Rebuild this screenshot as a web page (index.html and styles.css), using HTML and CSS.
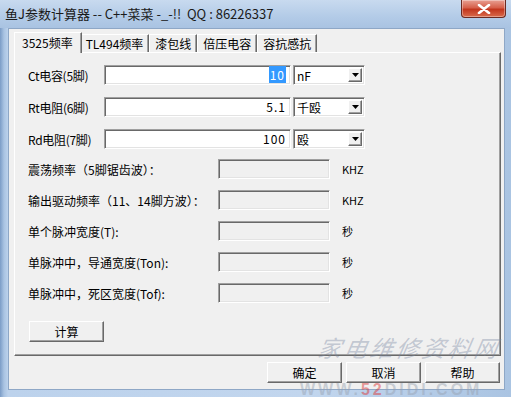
FILE: index.html
```html
<!DOCTYPE html>
<html lang="zh-CN">
<head>
    <meta charset="UTF-8">
    <title>鱼J参数计算器</title>
    <link rel="stylesheet" href="styles.css">
</head>
<body>
    <div class="window">
        <div class="titlebar">
            <span class="title">鱼J参数计算器 -- C++菜菜 -_-!!&nbsp; QQ : 86226337</span>
            <span class="close">
                <svg width="14" height="10" viewBox="0 0 14 10">
                    <path d="M2 1 L12 9 M12 1 L2 9" stroke="#ffffff" stroke-width="2.6" stroke-linecap="round"/>
                </svg>
            </span>
        </div>
        <div class="client">
            <div class="tabs">
                <div class="tab active">3525频率</div>
                <div class="tab">TL494频率</div>
                <div class="tab">漆包线</div>
                <div class="tab">倍压电容</div>
                <div class="tab">容抗感抗</div>
            </div>
            <div class="panel">
                <div class="row in-row">
                    <label class="lbl">Ct电容(5脚)</label>
                    <div class="field value"><span class="sel">10</span></div>
                    <div class="combo"><span class="combo-text">nF</span><span class="drop"><svg width="7" height="4" viewBox="0 0 7 4"><path d="M0 0 H7 L3.5 4 Z" fill="#000"/></svg></span></div>
                </div>
                <div class="row in-row">
                    <label class="lbl">Rt电阻(6脚)</label>
                    <div class="field value">5.1</div>
                    <div class="combo"><span class="combo-text">千殴</span><span class="drop"><svg width="7" height="4" viewBox="0 0 7 4"><path d="M0 0 H7 L3.5 4 Z" fill="#000"/></svg></span></div>
                </div>
                <div class="row in-row">
                    <label class="lbl">Rd电阻(7脚)</label>
                    <div class="field value">100</div>
                    <div class="combo"><span class="combo-text">殴</span><span class="drop"><svg width="7" height="4" viewBox="0 0 7 4"><path d="M0 0 H7 L3.5 4 Z" fill="#000"/></svg></span></div>
                </div>

                <div class="outputs">
                    <div class="row out-row">
                        <label class="lbl-out">震荡频率（5脚锯齿波）：</label>
                        <div class="field out"></div>
                        <span class="unit">KHZ</span>
                    </div>
                    <div class="row out-row">
                        <label class="lbl-out">输出驱动频率（11、14脚方波）：</label>
                        <div class="field out"></div>
                        <span class="unit">KHZ</span>
                    </div>
                    <div class="row out-row">
                        <label class="lbl-out">单个脉冲宽度(T):</label>
                        <div class="field out"></div>
                        <span class="unit">秒</span>
                    </div>
                    <div class="row out-row">
                        <label class="lbl-out">单脉冲中，导通宽度(Ton):</label>
                        <div class="field out"></div>
                        <span class="unit">秒</span>
                    </div>
                    <div class="row out-row">
                        <label class="lbl-out">单脉冲中，死区宽度(Tof):</label>
                        <div class="field out"></div>
                        <span class="unit">秒</span>
                    </div>
                </div>

                <button class="btn calc">计算</button>
            </div>
            <div class="actions">
                <button class="btn">确定</button>
                <button class="btn">取消</button>
                <button class="btn">帮助</button>
            </div>
        </div>
        <div class="watermark wm-top">家电维修资料网</div>
        <div class="watermark wm-url">WWW.<span class="wm-red">52</span>DIDI.COM</div>
    </div>
</body>
</html>
```

FILE: styles.css
```css
body {
    margin: 0;
    padding: 0;
    width: 511px;
    height: 397px;
    overflow: hidden;
    font-family: "Noto Sans CJK SC", "DejaVu Sans", sans-serif;
    font-size: 12px;
    color: #000000;
}
.window {
    position: relative;
    width: 511px;
    height: 397px;
    box-sizing: border-box;
    display: flex;
    flex-direction: column;
    background: linear-gradient(90deg, #7b9cc6 0px, #a9c3e2 4px, #bcd2ec 8px, #c2d6ee 60%, #aac4e2 100%);
    overflow: hidden;
}
.titlebar {
    height: 28px;
    display: flex;
    align-items: flex-start;
    background: linear-gradient(180deg, #c8daef 0%, #b3cbe7 60%, #a9c3e2 100%);
}
.title {
    margin: 4px 0 0 5px;
    font-size: 13px;
    color: #1a1a1a;
    white-space: nowrap;
}
.close {
    margin-left: auto;
    margin-right: 5px;
    width: 45px;
    height: 18px;
    box-sizing: border-box;
    display: flex;
    align-items: center;
    justify-content: center;
    border: 1px solid #6b2a22;
    border-top: none;
    border-radius: 0 0 4px 4px;
    background: linear-gradient(180deg, #e8a093 0%, #d6604b 45%, #c2361e 55%, #d96b4c 100%);
    box-shadow: inset 0 0 0 1px rgba(255, 255, 255, 0.35);
}
.client {
    margin: 0 6px 7px 8px;
    flex: 1;
    background-color: #f0f0f0;
    border: 1px solid #8ea7c6;
    box-sizing: border-box;
    display: flex;
    flex-direction: column;
    padding: 3px 3px 0 5px;
}
.tabs {
    display: flex;
    align-items: flex-end;
    height: 20px;
    padding-left: 2px;
}
.tab {
    height: 18px;
    box-sizing: border-box;
    padding: 0 5px;
    line-height: 17px;
    border-top: 1px solid #ffffff;
    border-left: 1px solid #ffffff;
    border-right: 1px solid #696969;
    box-shadow: inset -1px 0 0 #a0a0a0;
    white-space: nowrap;
    background-color: #f0f0f0;
}
.tab.active {
    height: 21px;
    margin: 0 -2px -1px -2px;
    padding: 0 8px 0 7px;
    line-height: 19px;
    position: relative;
    z-index: 1;
}
.panel {
    border-top: 1px solid #ffffff;
    border-left: 1px solid #ffffff;
    border-right: 1px solid #696969;
    border-bottom: 1px solid #696969;
    box-shadow: inset -1px -1px 0 #a0a0a0;
    padding: 12px 0 13px 13px;
    display: flex;
    flex-direction: column;
    gap: 12px;
}
.row {
    display: flex;
    align-items: center;
    height: 20px;
}
.lbl {
    width: 76px;
    white-space: nowrap;
    letter-spacing: -0.3px;
}
.field {
    height: 20px;
    box-sizing: border-box;
    border-top: 1px solid #a0a0a0;
    border-left: 1px solid #a0a0a0;
    border-right: 1px solid #ffffff;
    border-bottom: 1px solid #ffffff;
    box-shadow: inset 1px 1px 0 #696969, inset -1px -1px 0 #e3e3e3;
}
.value {
    width: 187px;
    background-color: #ffffff;
    text-align: right;
    padding: 0 4px;
    line-height: 18px;
    letter-spacing: 1px;
}
.sel {
    background-color: #3399ff;
    color: #ffffff;
    padding: 0 1px;
}
.combo {
    margin-left: 2px;
    width: 72px;
    height: 20px;
    box-sizing: border-box;
    display: flex;
    align-items: center;
    background-color: #ffffff;
    border-top: 1px solid #a0a0a0;
    border-left: 1px solid #a0a0a0;
    border-right: 1px solid #ffffff;
    border-bottom: 1px solid #ffffff;
    box-shadow: inset 1px 1px 0 #696969, inset -1px -1px 0 #e3e3e3;
    padding: 0 2px 0 3px;
}
.combo-text {
    flex: 1;
}
.drop {
    width: 14px;
    height: 14px;
    box-sizing: border-box;
    display: flex;
    align-items: center;
    justify-content: center;
    background-color: #f0f0f0;
    border-top: 1px solid #ffffff;
    border-left: 1px solid #ffffff;
    border-right: 1px solid #696969;
    border-bottom: 1px solid #696969;
    box-shadow: inset -1px -1px 0 #a0a0a0;
}
.outputs {
    display: flex;
    flex-direction: column;
    gap: 11px;
    margin-top: -2px;
}
.lbl-out {
    width: 190px;
    white-space: nowrap;
}
.out {
    width: 112px;
    background-color: #f0f0f0;
}
.unit {
    margin-left: 12px;
    font-size: 11px;
}
.btn {
    height: 21px;
    width: 75px;
    box-sizing: border-box;
    padding: 0;
    font-family: inherit;
    font-size: 12px;
    color: #000000;
    background-color: #f0f0f0;
    border-top: 1px solid #ffffff;
    border-left: 1px solid #ffffff;
    border-right: 1px solid #696969;
    border-bottom: 1px solid #696969;
    box-shadow: inset -1px -1px 0 #a0a0a0;
}
.calc {
    margin-top: 6px;
    margin-left: 1px;
}
.actions {
    display: flex;
    justify-content: flex-end;
    gap: 4px;
    margin-top: 6px;
    padding-right: 1px;
}
.watermark {
    position: absolute;
    pointer-events: none;
    white-space: nowrap;
}
.wm-top {
    left: 318px;
    top: 338px;
    font-family: "Liberation Serif", "Noto Sans CJK SC", serif;
    font-style: italic;
    font-size: 23px;
    letter-spacing: 3px;
    line-height: 24px;
    color: rgba(120, 135, 160, 0.4);
    transform: skewX(-10deg);
}
.wm-url {
    left: 300px;
    top: 383px;
    font-family: "Liberation Sans", sans-serif;
    font-weight: bold;
    font-size: 16px;
    letter-spacing: 3px;
    line-height: 14px;
    color: rgba(150, 160, 175, 0.45);
}
.wm-red {
    color: rgba(220, 60, 60, 0.5);
}
```
